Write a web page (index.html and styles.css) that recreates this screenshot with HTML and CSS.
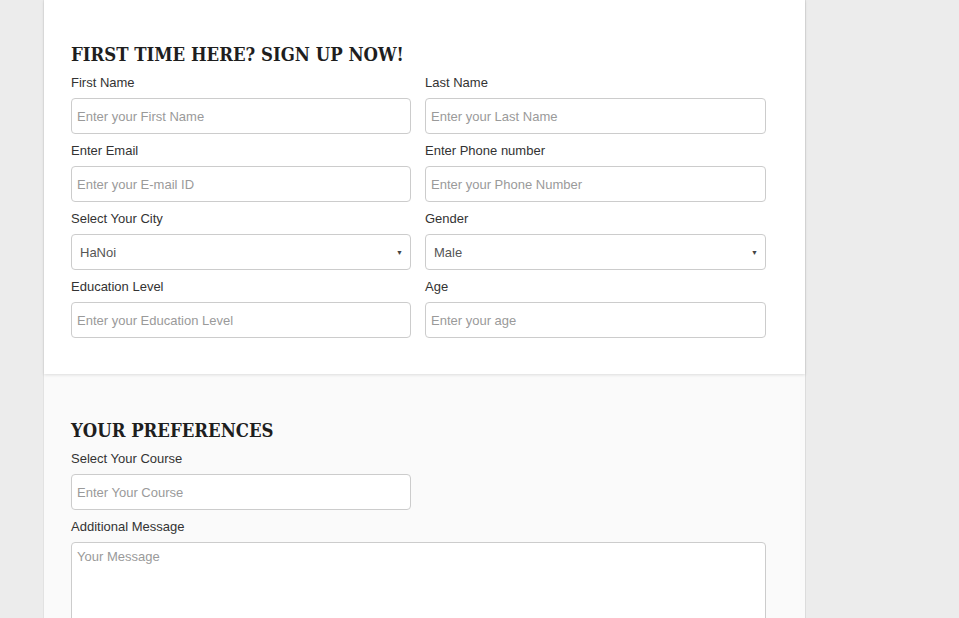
FILE: index.html
```html
<!DOCTYPE html>
<html>
<head>
<meta charset="utf-8">
<link rel="stylesheet" href="styles.css">
</head>
<body>
<div class="page">
  <div class="card">
    <section class="sec sec-main">
      <h2 class="title">FIRST TIME HERE? SIGN UP NOW!</h2>
      <div class="grid">
        <div class="field"><label>First Name</label><input class="ctl" placeholder="Enter your First Name"></div>
        <div class="field"><label>Last Name</label><input class="ctl" placeholder="Enter your Last Name"></div>
        <div class="field"><label>Enter Email</label><input class="ctl" placeholder="Enter your E-mail ID"></div>
        <div class="field"><label>Enter Phone number</label><input class="ctl" placeholder="Enter your Phone Number"></div>
        <div class="field"><label>Select Your City</label><div class="ctl sel"><span>HaNoi</span><span class="arrow">▼</span></div></div>
        <div class="field"><label>Gender</label><div class="ctl sel"><span>Male</span><span class="arrow">▼</span></div></div>
        <div class="field"><label>Education Level</label><input class="ctl" placeholder="Enter your Education Level"></div>
        <div class="field"><label>Age</label><input class="ctl" placeholder="Enter your age"></div>
      </div>
    </section>
    <section class="sec sec-alt">
      <h2 class="title">YOUR PREFERENCES</h2>
      <div class="grid">
        <div class="field"><label>Select Your Course</label><input class="ctl" placeholder="Enter Your Course"></div>
        <div class="field"></div>
        <div class="field wide"><label>Additional Message</label><textarea class="ctl area" placeholder="Your Message"></textarea></div>
      </div>
    </section>
  </div>
</div>
</body>
</html>
```
FILE: styles.css
```css
html, body { margin: 0; padding: 0; }
body {
  background: #ececec;
  font-family: "Liberation Sans", Arial, sans-serif;
  font-size: 13px;
  color: #333;
  overflow: hidden;
  height: 618px;
}
.page { padding-left: 43px; }
.card {
  width: 761px;
  background: #fafafa;
  border-left: 1px solid #e2e2e2;
  border-right: 1px solid #dcdcdc;
  min-height: 618px;
}
.sec { padding: 42px 39px 28px 27px; }
.sec-main { background: #fff; box-shadow: 0 1px 3px rgba(0,0,0,0.12); position: relative; }
.sec-alt { padding-top: 44px; }
.title {
  font-family: "DejaVu Serif", serif;
  font-stretch: condensed;
  font-weight: bold;
  font-size: 18.4px;
  line-height: 26px;
  margin: 0 0 6px;
  color: #1e1e1e;
  letter-spacing: 0;
}
.grid {
  display: grid;
  grid-template-columns: 340px 341px;
  column-gap: 14px;
}
.field { margin-bottom: 8px; }
.field.wide { grid-column: 1 / 3; }
label {
  display: block;
  line-height: 18px;
  margin-bottom: 6px;
  color: #333;
}
.ctl {
  display: block;
  box-sizing: border-box;
  width: 100%;
  height: 36px;
  border: 1px solid #ccc;
  border-radius: 4px;
  background: #fff;
  padding: 0 5px;
  font-family: "Liberation Sans", Arial, sans-serif;
  font-size: 13px;
  color: #555;
  margin: 0;
}
.ctl::placeholder { color: #9a9a9a; }
.sel {
  display: flex;
  align-items: center;
  justify-content: space-between;
  padding: 0 7px 0 8px;
}
.arrow { font-size: 7px; color: #444; }
.area { height: 120px; padding: 6px 5px; resize: none; }
```
